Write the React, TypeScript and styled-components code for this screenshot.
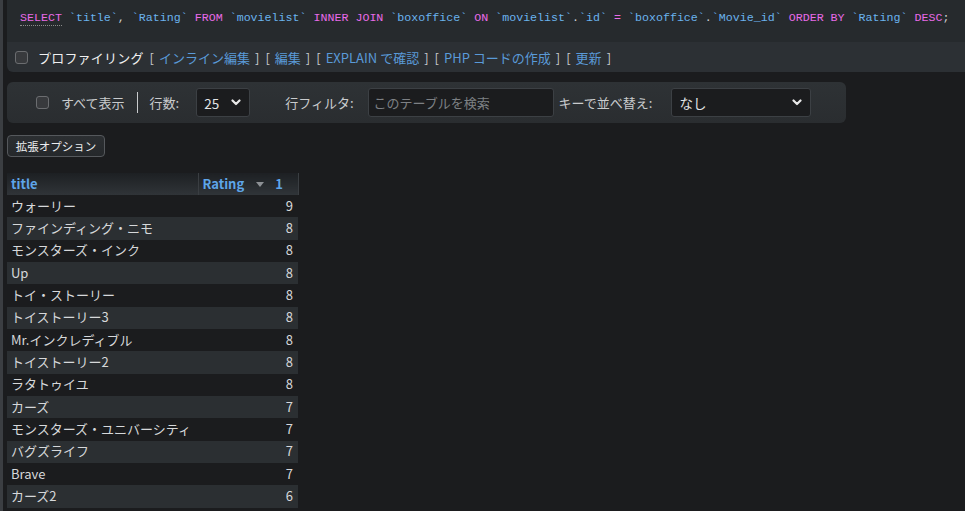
import React from "react";
import styled, { createGlobalStyle } from "styled-components";

const Global = createGlobalStyle`
  html, body { margin: 0; padding: 0; background: #1b1c1e; }
  body {
    font-family: "Noto Sans CJK JP", "Noto Sans", sans-serif;
    font-size: 13px;
    color: #d4d6d8;
    overflow: hidden;
  }
`;

const Page = styled.div`
  display: flex;
  min-height: 511px;
  border-left: 3px solid #3b3e42;
  background: #1b1c1e;
`;

const Main = styled.div`
  flex: 1;
  padding-left: 4px;
  display: flex;
  flex-direction: column;
  align-items: flex-start;
  min-width: 0;
`;

const QueryCard = styled.div`
  align-self: stretch;
  display: flex;
  flex-direction: column;
`;

const SqlBox = styled.div`
  display: block;
  height: 42px;
  box-sizing: border-box;
  background: #262a2d;
  padding: 11px 0 0 13px;
  line-height: 14px;
  white-space: pre;
  font-family: "Liberation Mono", "DejaVu Sans Mono", monospace;
  font-size: 11.65px;
  color: #cfd2d4;
`;

const Kw = styled.span<{ $under?: boolean }>`
  color: #e96be8;
  ${(p) => (p.$under ? "border-bottom: 1px dotted #8a8a8a; padding-bottom: 1px;" : "")}
`;
const Id = styled.span`
  color: #6ab3ee;
`;

const ProfileBar = styled.div`
  height: 30px;
  background: #2c3034;
  border-radius: 0 0 0 6px;
  display: flex;
  align-items: center;
  padding-left: 8px;
  white-space: nowrap;
  color: #d6d8da;
`;

const Check = styled.span`
  display: inline-block;
  width: 11px;
  height: 11px;
  border: 1px solid #6b6d70;
  background: #383a3d;
  border-radius: 3px;
  flex: none;
`;

const ProfileLabel = styled.span`
  margin-left: 10px;
  color: #f0f0f0;
  letter-spacing: 0.2px;
`;

const Bracket = styled.span`
  color: #c9cbcd;
  margin-left: 6px;
`;

const Close = styled.span`
  color: #c9cbcd;
`;

const Link = styled.a`
  color: #5a9ad8;
  text-decoration: none;
  margin: 0 5px 0 5px;
`;

const Nav = styled.div`
  margin-top: 10px;
  width: 839px;
  height: 41px;
  box-sizing: border-box;
  border-radius: 6px;
  background: linear-gradient(#2e3235, #2a2d30);
  display: flex;
  align-items: center;
  padding-left: 29px;
  color: #c9cbcd;
  white-space: nowrap;
`;

const NavText = styled.span<{ $ml?: number }>`
  margin-left: ${(p) => p.$ml ?? 0}px;
`;

const Sep = styled.span`
  width: 1px;
  height: 21px;
  background: #c9cbcd;
  margin-left: 12px;
`;

const SelectBox = styled.div<{ $w: number; $ml: number }>`
  margin-left: ${(p) => p.$ml}px;
  width: ${(p) => p.$w}px;
  height: 29px;
  box-sizing: border-box;
  border: 1px solid #3c4044;
  border-radius: 3px;
  background: #1b1c1e;
  display: flex;
  align-items: center;
  justify-content: space-between;
  padding: 0 8px 0 7px;
  color: #e2e4e6;
  font-size: 13.5px;
`;

const InputBox = styled.div`
  margin-left: 14px;
  width: 186px;
  height: 29px;
  box-sizing: border-box;
  border: 1px solid #3c4044;
  border-radius: 3px;
  background: #1b1c1e;
  display: flex;
  align-items: center;
  padding-left: 5px;
  color: #7d8084;
`;

const OptButton = styled.button`
  margin-top: 12px;
  height: 22px;
  width: 98px;
  box-sizing: border-box;
  border: 1px solid #55585c;
  border-radius: 4px;
  background: linear-gradient(#2c2f32, #25282b);
  color: #eceef0;
  font-family: "Noto Sans CJK JP", sans-serif;
  font-size: 11.5px;
  padding: 0;
  display: flex;
  align-items: center;
  justify-content: center;
`;

const Table = styled.table`
  margin-top: 16px;
  border-collapse: collapse;
  width: 291px;
  table-layout: fixed;
`;

const Th = styled.th<{ $w: number }>`
  width: ${(p) => p.$w}px;
  height: 22px;
  padding: 0 0 1px 4px;
  text-align: left;
  vertical-align: middle;
  font-weight: bold;
  color: #5ea5e9;
  background: linear-gradient(#1d2023, #303438);
  border-right: 1px solid #3a3e42;
  box-sizing: border-box;
  white-space: nowrap;
  line-height: 20px;
`;

const SortMark = styled.span`
  display: inline-block;
  margin-left: 12px;
`;

const Tri = styled.span`
  width: 0;
  height: 0;
  border-left: 4px solid transparent;
  border-right: 4px solid transparent;
  border-top: 5px solid #8d9094;
  display: inline-block;
  vertical-align: middle;
  margin-right: 11px;
`;

const Tr = styled.tr<{ $alt: boolean }>`
  height: 22.33px;
  background: ${(p) => (p.$alt ? "#2b2f32" : "transparent")};
`;

const Td = styled.td<{ $num?: boolean }>`
  padding: ${(p) => (p.$num ? "0 5px 1px 0" : "0 0 1px 4px")};
  text-align: ${(p) => (p.$num ? "right" : "left")};
  color: #d6d8da;
  white-space: nowrap;
  line-height: 20px;
`;

const Chevron = () => (
  <svg width="10" height="7" viewBox="0 0 10 7">
    <path d="M1.5 1.5 L5 5 L8.5 1.5" fill="none" stroke="#e8e8e8" strokeWidth="2.2" strokeLinecap="round" strokeLinejoin="round" />
  </svg>
);

const rows: [string, number][] = [
  ["ウォーリー", 9],
  ["ファインディング・ニモ", 8],
  ["モンスターズ・インク", 8],
  ["Up", 8],
  ["トイ・ストーリー", 8],
  ["トイストーリー3", 8],
  ["Mr.インクレディブル", 8],
  ["トイストーリー2", 8],
  ["ラタトゥイユ", 8],
  ["カーズ", 7],
  ["モンスターズ・ユニバーシティ", 7],
  ["バグズライフ", 7],
  ["Brave", 7],
  ["カーズ2", 6],
];

const links = ["インライン編集", "編集", "EXPLAIN で確認", "PHP コードの作成", "更新"];

export default function App() {
  return (
    <>
      <Global />
      <Page>
        <Main>
          <QueryCard>
            <SqlBox>
              <Kw $under>SELECT</Kw>{" "}<Id>`title`</Id>{", "}<Id>`Rating`</Id>{" "}<Kw>FROM</Kw>{" "}
              <Id>`movielist`</Id>{" "}<Kw>INNER JOIN</Kw>{" "}<Id>`boxoffice`</Id>{" "}<Kw>ON</Kw>{" "}
              <Id>`movielist`</Id>{"."}<Id>`id`</Id>{" "}<Kw>=</Kw>{" "}<Id>`boxoffice`</Id>{"."}
              <Id>`Movie_id`</Id>{" "}<Kw>ORDER BY</Kw>{" "}<Id>`Rating`</Id>{" "}<Kw>DESC</Kw>{";"}
            </SqlBox>
            <ProfileBar>
              <Check />
              <ProfileLabel>プロファイリング</ProfileLabel>
              {links.map((l) => (
                <React.Fragment key={l}>
                  <Bracket>[</Bracket>
                  <Link>{l}</Link>
                  <Close>]</Close>
                </React.Fragment>
              ))}
            </ProfileBar>
          </QueryCard>

          <Nav>
            <Check />
            <NavText $ml={12}>すべて表示</NavText>
            <Sep />
            <NavText $ml={12}>行数:</NavText>
            <SelectBox $w={54} $ml={17}>
              <span>25</span>
              <Chevron />
            </SelectBox>
            <NavText $ml={35}>行フィルタ:</NavText>
            <InputBox>このテーブルを検索</InputBox>
            <NavText $ml={5}>キーで並べ替え:</NavText>
            <SelectBox $w={140} $ml={19}>
              <span>なし</span>
              <Chevron />
            </SelectBox>
          </Nav>

          <OptButton>拡張オプション</OptButton>

          <Table>
            <thead>
              <tr>
                <Th $w={191}>title</Th>
                <Th $w={100}>
                  Rating
                  <SortMark>
                    <Tri />
                    1
                  </SortMark>
                </Th>
              </tr>
            </thead>
            <tbody>
              {rows.map(([t, r], i) => (
                <Tr key={i} $alt={i % 2 === 1}>
                  <Td>{t}</Td>
                  <Td $num>{r}</Td>
                </Tr>
              ))}
            </tbody>
          </Table>
        </Main>
      </Page>
    </>
  );
}
